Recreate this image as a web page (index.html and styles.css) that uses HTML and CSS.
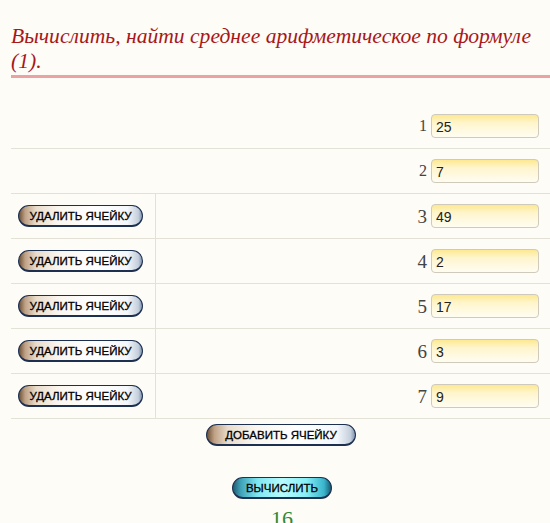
FILE: index.html
```html
<!DOCTYPE html>
<html lang="ru">
<head>
<meta charset="utf-8">
<link rel="stylesheet" href="styles.css">
</head>
<body>
<h1 class="title">Вычислить, найти среднее арифметическое по формуле (1).</h1>
<div class="cells">
  <div class="row">
    <div class="left"></div>
    <div class="right plain"><span class="num small">1</span><input class="field" value="25"></div>
  </div>
  <div class="row">
    <div class="left"></div>
    <div class="right plain"><span class="num small">2</span><input class="field" value="7"></div>
  </div>
  <div class="row">
    <div class="left"><button class="btn btn-del">УДАЛИТЬ ЯЧЕЙКУ</button></div>
    <div class="right"><span class="num">3</span><input class="field" value="49"></div>
  </div>
  <div class="row">
    <div class="left"><button class="btn btn-del">УДАЛИТЬ ЯЧЕЙКУ</button></div>
    <div class="right"><span class="num">4</span><input class="field" value="2"></div>
  </div>
  <div class="row">
    <div class="left"><button class="btn btn-del">УДАЛИТЬ ЯЧЕЙКУ</button></div>
    <div class="right"><span class="num">5</span><input class="field" value="17"></div>
  </div>
  <div class="row">
    <div class="left"><button class="btn btn-del">УДАЛИТЬ ЯЧЕЙКУ</button></div>
    <div class="right"><span class="num">6</span><input class="field" value="3"></div>
  </div>
  <div class="row">
    <div class="left"><button class="btn btn-del">УДАЛИТЬ ЯЧЕЙКУ</button></div>
    <div class="right"><span class="num">7</span><input class="field" value="9"></div>
  </div>
</div>
<div class="actions">
  <button class="btn btn-add">ДОБАВИТЬ ЯЧЕЙКУ</button>
  <button class="btn btn-calc">ВЫЧИСЛИТЬ</button>
  <div class="result">16</div>
</div>
</body>
</html>
```
FILE: styles.css
```css
html, body {
  margin: 0;
  padding: 0;
  background: #fdfcf6;
  overflow: hidden;
}
body {
  padding: 0 0 0 11px;
  font-family: "Liberation Sans", Arial, sans-serif;
}
.title {
  margin: 0;
  padding-top: 24px;
  padding-bottom: 1px;
  font-family: "Liberation Serif", "DejaVu Serif", serif;
  font-style: italic;
  font-weight: normal;
  font-size: 21.6px;
  line-height: 25px;
  color: #a8171a;
  border-bottom: 3px solid #eba2a2;
  width: 539px;
}
.cells {
  margin-top: 26px;
  width: 539px;
}
.row {
  display: grid;
  grid-template-columns: 144px 1fr;
  height: 44px;
  border-bottom: 1px solid #e4e1d6;
}
.left {
  display: flex;
  align-items: center;
  padding-left: 7px;
}
.right {
  display: flex;
  align-items: center;
  justify-content: flex-end;
  padding-right: 11px;
  border-left: 1px solid #e4e1d6;
}
.right.plain {
  border-left: none;
}
.num {
  font-family: "Liberation Serif", "DejaVu Serif", serif;
  font-size: 19px;
  color: #444;
  margin-right: 4px;
  padding-top: 2px;
}
.num.small {
  font-size: 16px;
  padding-top: 0;
}
.field {
  box-sizing: border-box;
  width: 108px;
  height: 24px;
  margin: 0;
  padding: 2px 4px 0;
  border: 1px solid #cfcabb;
  border-radius: 4px;
  background: linear-gradient(to bottom, #fde890 0%, #fff5cc 35%, #fffdf2 100%);
  font-family: "Liberation Sans", Arial, sans-serif;
  font-size: 14px;
  color: #222;
}
.btn {
  box-sizing: border-box;
  height: 22px;
  padding: 0;
  border: 1px solid #1d3050;
  border-bottom-width: 2px;
  border-radius: 11px;
  font-family: "Liberation Sans", Arial, sans-serif;
  font-size: 11.5px;
  font-weight: normal;
  -webkit-text-stroke: 0.3px #000;
  color: #000;
  line-height: 18px;
}
.btn-del, .btn-add {
  background: linear-gradient(to right, #6e5036 0%, #bfa186 5%, #e9dccb 14%, #faf6ef 32%, #ffffff 60%, #f4f7fb 88%, #c4cfdc 97%, #8092ad 100%);
}
.btn-del {
  width: 125px;
}
.actions {
  width: 539px;
  display: flex;
  flex-direction: column;
  align-items: center;
  padding-top: 5px;
}
.btn-add {
  width: 150px;
  margin-left: 1px;
}
.btn-calc {
  width: 100px;
  margin-top: 31px;
  margin-left: 3px;
  background: linear-gradient(to right, #1d5c70 0%, #3fa3b8 8%, #7ee6f2 25%, #b6fbfd 50%, #86eef6 75%, #38b4cc 93%, #1a5a70 100%);
}
.result {
  margin-top: 8px;
  margin-left: 3px;
  font-family: "Liberation Serif", "DejaVu Serif", serif;
  font-size: 22px;
  color: #2d8a36;
  line-height: 24px;
}
```
